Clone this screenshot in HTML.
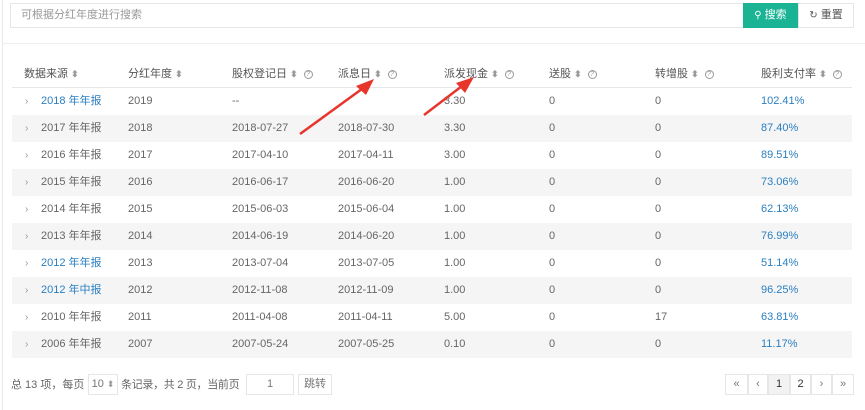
<!DOCTYPE html>
<html><head><meta charset="utf-8">
<style>
*{margin:0;padding:0;box-sizing:border-box}
body{width:865px;height:410px;background:#fff;font-family:"Liberation Sans","Noto Sans CJK SC",sans-serif;font-size:11px;color:#666;position:relative;overflow:hidden}
.lb{position:absolute;left:2px;top:0;width:1px;height:410px;background:#e8e8e8}
.search{position:absolute;left:10px;top:3px;width:733px;height:25px;border:1px solid #e6e6e6;border-right:none;color:#999;font-size:11px;line-height:23px;padding-left:10px}
.btn1{position:absolute;left:743px;top:3px;width:55px;height:25px;background:#1ab394;color:#fff;line-height:25px;text-align:center;font-size:11px}
.btn2{position:absolute;left:798px;top:3px;width:56px;height:25px;border:1px solid #e6e6e6;color:#555;line-height:23px;text-align:center;font-size:11px}
.hr{position:absolute;left:3px;top:43px;width:862px;height:1px;background:#eee}
.row{position:absolute;left:12px;width:840px;height:27px;line-height:27px}
.row.g{background:#f5f5f5}
.row span{position:absolute;white-space:nowrap}
.hd{top:61px;height:27px;border-bottom:1px solid #e6e6e6;color:#555}
.s{color:#999;font-size:9px}
.q{display:inline-block;width:9px;height:9px;border:1px solid #999;border-radius:50%;font-size:7px;line-height:7px;text-align:center;color:#999;vertical-align:middle;margin-left:6px}
.a{color:#2a7fc1}
.ar{color:#999;font-size:10px}
.pg{position:absolute;top:374px;height:21px;line-height:19px;border:1px solid #e6e6e6;text-align:center;color:#777}
</style></head><body>
<div class="lb"></div>
<div class="search">可根据分红年度进行搜索</div>
<div class="btn1"><span style="font-size:10px">⚲</span> 搜索</div>
<div class="btn2"><span style="font-size:10px">↻</span> 重置</div>
<div class="hr"></div>

<div class="row hd">
<span style="left:12px">数据来源 <b class="s">⬍</b></span>
<span style="left:116px">分红年度 <b class="s">⬍</b></span>
<span style="left:220px">股权登记日 <b class="s">⬍</b><i class="q">?</i></span>
<span style="left:326px">派息日 <b class="s">⬍</b><i class="q">?</i></span>
<span style="left:432px">派发现金 <b class="s">⬍</b><i class="q">?</i></span>
<span style="left:537px">送股 <b class="s">⬍</b><i class="q">?</i></span>
<span style="left:643px">转增股 <b class="s">⬍</b><i class="q">?</i></span>
<span style="left:749px">股利支付率 <b class="s">⬍</b><i class="q">?</i></span>
</div>

<div id="rows"></div>
<script>
var d=[["2018 年年报",1,"2019","--","","3.30","0","0","102.41%"],
["2017 年年报",0,"2018","2018-07-27","2018-07-30","3.30","0","0","87.40%"],
["2016 年年报",0,"2017","2017-04-10","2017-04-11","3.00","0","0","89.51%"],
["2015 年年报",0,"2016","2016-06-17","2016-06-20","1.00","0","0","73.06%"],
["2014 年年报",0,"2015","2015-06-03","2015-06-04","1.00","0","0","62.13%"],
["2013 年年报",0,"2014","2014-06-19","2014-06-20","1.00","0","0","76.99%"],
["2012 年年报",1,"2013","2013-07-04","2013-07-05","1.00","0","0","51.14%"],
["2012 年中报",1,"2012","2012-11-08","2012-11-09","1.00","0","0","96.25%"],
["2010 年年报",0,"2011","2011-04-08","2011-04-11","5.00","0","17","63.81%"],
["2006 年年报",0,"2007","2007-05-24","2007-05-25","0.10","0","0","11.17%"]];
var x=[29,116,220,326,432,537,643,749],h="";
d.forEach(function(r,i){
h+='<div class="row'+(i%2?' g':'')+'" style="top:'+(88+i*27)+'px"><span class="ar" style="left:13px">›</span>';
h+='<span'+(r[1]?' class="a"':'')+' style="left:29px">'+r[0]+'</span>';
for(var j=2;j<9;j++)h+='<span'+(j==8?' class="a"':'')+' style="left:'+x[j-1]+'px">'+r[j]+'</span>';
h+='</div>';});
document.getElementById('rows').innerHTML=h;
</script>

<svg style="position:absolute;left:0;top:0" width="865" height="410">
<g fill="#e8352b" stroke="#e8352b">
<line x1="300" y1="134" x2="366" y2="86" stroke-width="2.5"/>
<polygon points="374,79 356,86 366,95" stroke="none"/>
<line x1="424" y1="115" x2="466" y2="83" stroke-width="2.5"/>
<polygon points="474,77 456,83 465,93" stroke="none"/>
</g></svg>

<div style="position:absolute;left:11px;top:377px;line-height:16px">总 13 项，每页</div>
<div class="pg" style="left:88px;width:30px">10 <span class="s">⬍</span></div>
<div style="position:absolute;left:121px;top:377px;line-height:16px;letter-spacing:-0.3px">条记录，共 2 页，当前页</div>
<div class="pg" style="left:246px;width:48px">1</div>
<div class="pg" style="left:298px;width:34px">跳转</div>
<div class="pg" style="left:725px;width:23px">«</div>
<div class="pg" style="left:748px;width:20px">‹</div>
<div class="pg" style="left:768px;width:22px;background:#f2f2f2;color:#333">1</div>
<div class="pg" style="left:790px;width:21px;color:#333">2</div>
<div class="pg" style="left:811px;width:21px">›</div>
<div class="pg" style="left:832px;width:22px">»</div>
</body></html>
